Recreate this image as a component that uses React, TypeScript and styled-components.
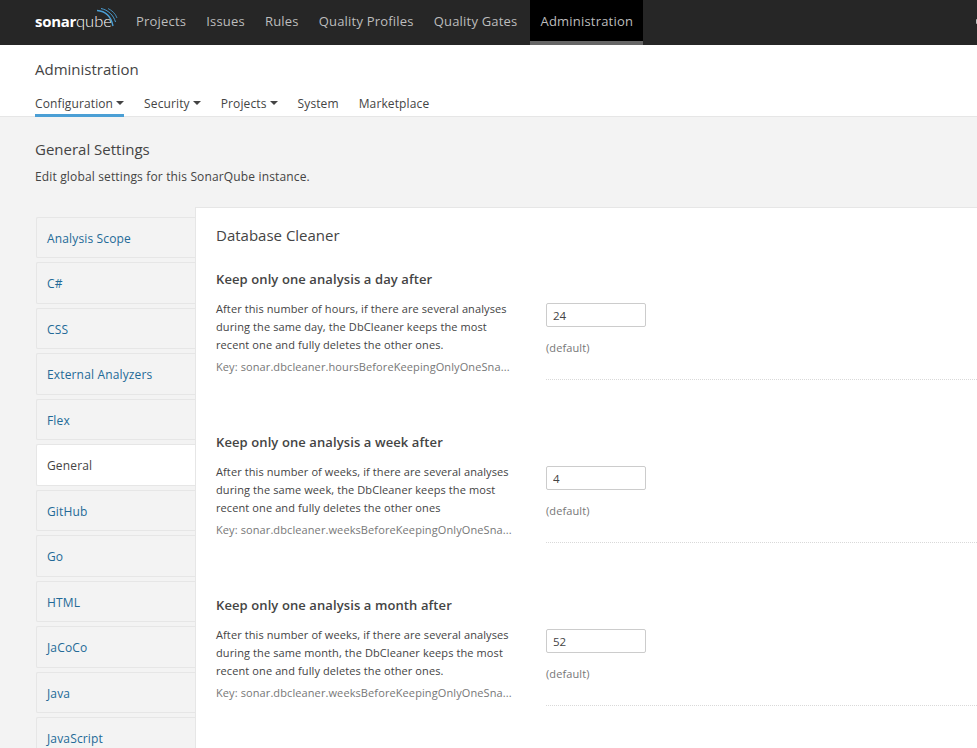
import * as React from 'react';
import styled, { createGlobalStyle } from 'styled-components';

const FONT = '"Open Sans", "Noto Sans", sans-serif';

const GlobalStyle = createGlobalStyle`
    html, body {
        margin: 0;
        padding: 0;
        height: 748px;
        overflow: hidden;
        background: #f3f3f3;
        font-family: ${FONT};
        color: #444;
    }
`;

const TopBar = styled.nav`
    display: flex;
    align-items: stretch;
    height: 45px;
    padding-left: 35px;
    background: #262626;
    overflow: hidden;
`;

const Logo = styled.div`
    display: flex;
    align-items: center;
    position: relative;
    width: 91px;
    color: #fff;
    font-size: 15px;
    letter-spacing: -0.3px;
    padding-bottom: 3px;
    box-sizing: border-box;
`;

const LogoBold = styled.span`
    font-weight: 700;
`;

const LogoThin = styled.span`
    font-family: "Lato", sans-serif;
    font-weight: 300;
    font-size: 16.5px;
    letter-spacing: 0;
`;

const LogoArcs = styled.svg`
    position: absolute;
    left: 62px;
    top: 8px;
`;

const TopItem = styled.a<{ $active?: boolean }>`
    display: flex;
    align-items: center;
    padding: 0 10px ${p => (p.$active ? '0' : '3px')};
    margin-left: ${p => (p.$active ? '3px' : '0')};
    font-size: 13px;
    letter-spacing: 0.2px;
    color: #bdbdbd;
    background: ${p => (p.$active ? '#000' : 'transparent')};
    border-bottom: ${p => (p.$active ? '4px solid #666' : 'none')};
    box-sizing: border-box;
    white-space: nowrap;
`;

const SearchEdge = styled.span`
    margin: 19px -1px 0 auto;
    width: 2px;
    height: 5px;
    border-radius: 2px;
    background: #bdbdbd;
`;

const PageHeader = styled.header`
    height: 72px;
    box-sizing: border-box;
    padding: 14px 35px 0;
    background: #fff;
    border-bottom: 1px solid #e6e6e6;
`;

const PageTitle = styled.h1`
    margin: 0;
    font-size: 15px;
    line-height: 20px;
    font-weight: 400;
    color: #444;
`;

const Tabs = styled.div`
    display: flex;
    gap: 20px;
    margin-top: 13px;
`;

const Tab = styled.a<{ $active?: boolean }>`
    display: flex;
    align-items: center;
    gap: 3px;
    height: 22px;
    font-size: 12px;
    letter-spacing: 0.12px;
    color: #444;
    border-bottom: 3px solid ${p => (p.$active ? '#4b9fd5' : 'transparent')};
`;

const Caret = styled.span`
    width: 0;
    height: 0;
    border-left: 4px solid transparent;
    border-right: 4px solid transparent;
    border-top: 4px solid #444;
`;

const Intro = styled.section`
    padding: 22px 35px 0;
    height: 90px;
    box-sizing: border-box;
`;

const IntroTitle = styled.h2`
    margin: 0;
    font-size: 15px;
    line-height: 20px;
    font-weight: 400;
`;

const IntroText = styled.p`
    margin: 9px 0 0;
    font-size: 12px;
    letter-spacing: 0.15px;
    line-height: 18px;
`;

const Columns = styled.div`
    display: flex;
    align-items: flex-start;
    padding-left: 36px;
`;

const Side = styled.ul`
    list-style: none;
    width: 159px;
    margin: 9.9px 0 0;
    padding: 0;
    display: flex;
    flex-direction: column;
    gap: 4px;
`;

const SideItem = styled.li<{ $active?: boolean }>`
    display: flex;
    align-items: center;
    height: 41.5px;
    box-sizing: border-box;
    padding: 1px 0 0 10px;
    font-size: 12px;
    letter-spacing: 0.15px;
    border: 1px solid #e6e6e6;
    border-right: none;
    border-radius: 2px 0 0 2px;
    background: ${p => (p.$active ? '#fff' : '#f3f3f3')};
    color: ${p => (p.$active ? '#444' : '#236a97')};
`;

const Panel = styled.main`
    flex: 1;
    min-height: 560px;
    box-sizing: border-box;
    padding: 17px 0 0 20px;
    background: #fff;
    border: 1px solid #e6e6e6;
    border-right: none;
    border-bottom: none;
`;

const PanelTitle = styled.h3`
    margin: 0 0 24px;
    font-size: 15px;
    line-height: 20px;
    font-weight: 400;
`;

const Setting = styled.article`
    height: 163px;
`;

const SettingTitle = styled.h4`
    margin: 0 0 11px;
    font-size: 13px;
    letter-spacing: 0.1px;
    line-height: 20px;
    font-weight: 600;
`;

const SettingBody = styled.div`
    display: flex;
`;

const Description = styled.div`
    width: 330px;
    font-size: 11px;
    letter-spacing: 0.1px;
    line-height: 18px;
`;

const SettingKey = styled.div`
    margin-top: 4px;
    color: #777;
    white-space: nowrap;
`;

const Control = styled.div`
    flex: 1;
    height: 76px;
    padding-top: 3px;
    border-bottom: 1px dotted #d9d9d9;
`;

const ValueInput = styled.input`
    display: block;
    width: 100px;
    height: 24px;
    box-sizing: border-box;
    padding: 0 6px;
    font-family: ${FONT};
    font-size: 11.5px;
    color: #444;
    border: 1px solid #ccc;
    border-radius: 2px;
    background: #fff;
`;

const DefaultNote = styled.div`
    margin-top: 12px;
    font-size: 11px;
    letter-spacing: 0.1px;
    line-height: 18px;
    color: #777;
`;

const topItems = ['Projects', 'Issues', 'Rules', 'Quality Profiles', 'Quality Gates'];
const sideItems = ['Analysis Scope', 'C#', 'CSS', 'External Analyzers', 'Flex', 'General', 'GitHub', 'Go', 'HTML', 'JaCoCo', 'Java', 'JavaScript'];

const settings = [
    {
        title: 'Keep only one analysis a day after',
        lines: ['After this number of hours, if there are several analyses', 'during the same day, the DbCleaner keeps the most', 'recent one and fully deletes the other ones.'],
        settingKey: 'Key: sonar.dbcleaner.hoursBeforeKeepingOnlyOneSna...',
        value: '24'
    },
    {
        title: 'Keep only one analysis a week after',
        lines: ['After this number of weeks, if there are several analyses', 'during the same week, the DbCleaner keeps the most', 'recent one and fully deletes the other ones'],
        settingKey: 'Key: sonar.dbcleaner.weeksBeforeKeepingOnlyOneSna...',
        value: '4'
    },
    {
        title: 'Keep only one analysis a month after',
        lines: ['After this number of weeks, if there are several analyses', 'during the same month, the DbCleaner keeps the most', 'recent one and fully deletes the other ones.'],
        settingKey: 'Key: sonar.dbcleaner.weeksBeforeKeepingOnlyOneSna...',
        value: '52'
    }
];

const App = () => (
    <>
        <GlobalStyle />
        <TopBar>
            <Logo>
                <LogoBold>sonar</LogoBold>
                <LogoThin>qube</LogoThin>
                <LogoArcs width="22" height="22" viewBox="0 0 22 22" fill="none" stroke="#4b9fd5">
                    <path d="M0 2.5C8 3 14 8 16 18" strokeWidth="1.4" />
                    <path d="M4 0.5C11 2 16.5 7 18.5 14" strokeWidth="1" />
                    <path d="M11 0.5C15 2.5 18.5 5.5 20 10" strokeWidth="0.8" />
                </LogoArcs>
            </Logo>
            {topItems.map(item => <TopItem key={item}>{item}</TopItem>)}
            <TopItem $active>Administration</TopItem>
            <SearchEdge />
        </TopBar>
        <PageHeader>
            <PageTitle>Administration</PageTitle>
            <Tabs>
                <Tab $active>Configuration <Caret /></Tab>
                <Tab>Security <Caret /></Tab>
                <Tab>Projects <Caret /></Tab>
                <Tab>System</Tab>
                <Tab>Marketplace</Tab>
            </Tabs>
        </PageHeader>
        <Intro>
            <IntroTitle>General Settings</IntroTitle>
            <IntroText>Edit global settings for this SonarQube instance.</IntroText>
        </Intro>
        <Columns>
            <Side>
                {sideItems.map(item => <SideItem key={item} $active={item === 'General'}>{item}</SideItem>)}
            </Side>
            <Panel>
                <PanelTitle>Database Cleaner</PanelTitle>
                {settings.map(s => (
                    <Setting key={s.title}>
                        <SettingTitle>{s.title}</SettingTitle>
                        <SettingBody>
                            <Description>
                                {s.lines.map(line => <div key={line}>{line}</div>)}
                                <SettingKey>{s.settingKey}</SettingKey>
                            </Description>
                            <Control>
                                <ValueInput readOnly value={s.value} />
                                <DefaultNote>(default)</DefaultNote>
                            </Control>
                        </SettingBody>
                    </Setting>
                ))}
            </Panel>
        </Columns>
    </>
);

export default App;
